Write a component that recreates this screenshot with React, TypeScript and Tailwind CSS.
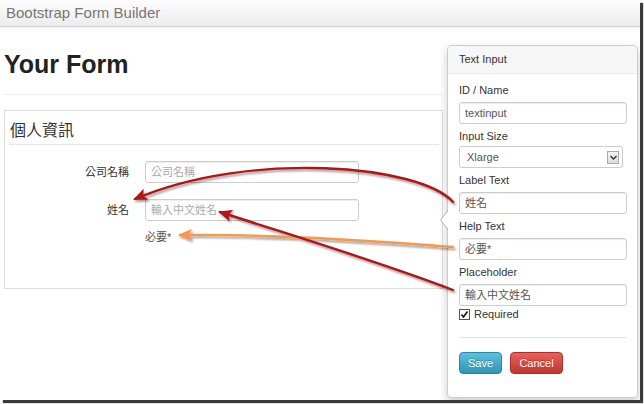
import React from "react";

const font = "font-['Liberation_Sans','Noto_Sans_CJK_TC',sans-serif]";

function Field({ label, value }: { label: string; value: string }) {
  return (
    <>
      <div className="mt-[5px] h-[14px] leading-[14px] text-[11px] text-[#333]">{label}</div>
      <div className="mt-[5px] h-[22px] w-[168px] rounded-[3px] border border-[#ccc] bg-white px-[5px] text-[11px] leading-[20px] text-[#555] shadow-[inset_0_1px_1px_rgba(0,0,0,0.075)]">
        {value}
      </div>
    </>
  );
}

function Arrows() {
  return (
    <svg className="absolute left-0 top-0 pointer-events-none" width="640" height="400" viewBox="0 0 640 400">
      <defs>
        <filter id="sh" filterUnits="userSpaceOnUse" x="0" y="0" width="640" height="400">
          <feDropShadow dx="1.5" dy="2" stdDeviation="1.2" floodColor="#000" floodOpacity="0.4" />
        </filter>
        <marker id="hr" markerUnits="userSpaceOnUse" viewBox="0 0 14 12" markerWidth="14" markerHeight="12" refX="12" refY="6" orient="auto">
          <path d="M0,0 L14,6 L0,12 L3,6 z" fill="#b01313" />
        </marker>
        <marker id="ho" markerUnits="userSpaceOnUse" viewBox="0 0 14 12" markerWidth="14" markerHeight="12" refX="12" refY="6" orient="auto">
          <path d="M0,0 L14,6 L0,12 L3,6 z" fill="#f7984a" />
        </marker>
      </defs>
      <g filter="url(#sh)" fill="none" strokeWidth="2.4" strokeLinecap="round">
        <path d="M453 202 C 420 165, 250 150, 135 199" stroke="#b01313" markerEnd="url(#hr)" />
        <path d="M453 247 C 350 239, 250 234, 180 235" stroke="#f7984a" markerEnd="url(#ho)" />
        <path d="M453 290 C 380 262, 300 238, 220 212" stroke="#b01313" markerEnd="url(#hr)" />
      </g>
    </svg>
  );
}

export default function App() {
  return (
    <div className={`w-[644px] h-[404px] bg-white ${font}`}>
      <div className="relative w-[640px] h-[400px] bg-white overflow-hidden shadow-[3px_3px_1px_#3c3c3c]">
        {/* navbar */}
        <div className="h-[27px] flex items-center px-[6px] bg-gradient-to-b from-[#fdfdfd] to-[#ececec] border-b border-[#d4d4d4] shadow-[0_1px_3px_rgba(0,0,0,0.08)]">
          <span className="text-[15px] text-[#777]">Bootstrap Form Builder</span>
        </div>

        <div className="px-[4px]">
          <h1 className="mt-[25px] text-[25px] leading-[25px] font-bold text-[#222]">Your Form</h1>
          <div className="mt-[17px] w-[439px] border-t border-[#eee]" />

          <div className="mt-[15px] w-[439px] h-[179px] border border-[#ddd] pl-[4px] pr-[3px]">
            <div className="mt-[10px] h-[24px] border-b border-[#e5e5e5] pl-[1px] text-[16px] leading-[20px] text-[#333]">
              個人資訊
            </div>

            <div className="mt-[16px] flex items-center">
              <div className="w-[120px] text-right text-[11px] text-[#333]">公司名稱</div>
              <div className="ml-[16px] h-[22px] w-[214px] rounded-[3px] border border-[#ccc] px-[5px] text-[11px] leading-[20px] text-[#aaa] shadow-[inset_0_1px_1px_rgba(0,0,0,0.075)]">
                公司名稱
              </div>
            </div>
            <div className="mt-[16px] flex items-center">
              <div className="w-[120px] text-right text-[11px] text-[#333]">姓名</div>
              <div className="ml-[16px] h-[22px] w-[214px] rounded-[3px] border border-[#ccc] px-[5px] text-[11px] leading-[20px] text-[#aaa] shadow-[inset_0_1px_1px_rgba(0,0,0,0.075)]">
                輸入中文姓名
              </div>
            </div>
            <div className="mt-[8px] ml-[136px] text-[11px] leading-[16px] text-[#555]">必要*</div>
          </div>
        </div>

        {/* popover */}
        <div className="absolute left-[447px] top-[45px] w-[191px] h-[353px] rounded-[5px] border border-[rgba(0,0,0,0.2)] bg-white shadow-[0_4px_10px_rgba(0,0,0,0.2)]">
          <div className="absolute left-[-8px] top-[164px] w-0 h-0 border-y-[10px] border-y-transparent border-r-[8px] border-r-[rgba(0,0,0,0.25)]" />
          <div className="absolute left-[-7px] top-[164px] w-0 h-0 border-y-[10px] border-y-transparent border-r-[8px] border-r-white" />
          <div className="h-[28px] rounded-t-[5px] border-b border-[#ebebeb] bg-[#f7f7f7] px-[11px] text-[11px] leading-[27px] text-[#333]">
            Text Input
          </div>
          <div className="px-[11px] pt-[4px]">
            <Field label="ID / Name" value="textinput" />
            <div className="mt-[5px] h-[14px] leading-[14px] text-[11px] text-[#333]">Input Size</div>
            <div className="mt-[3px] flex h-[22px] w-[164px] items-center justify-between rounded-[3px] border border-[#ccc] bg-white pl-[7px] pr-[3px] text-[11px] text-[#555]">
              <span>Xlarge</span>
              <span className="flex h-[13px] w-[12px] items-center justify-center border border-[#a9a9a9] bg-gradient-to-b from-[#f4f4f4] to-[#dcdcdc]">
                <svg width="7" height="5" viewBox="0 0 7 5">
                  <path d="M0.5 1 L3.5 4 L6.5 1" fill="none" stroke="#333" strokeWidth="1.4" />
                </svg>
              </span>
            </div>
            <Field label="Label Text" value="姓名" />
            <Field label="Help Text" value="必要*" />
            <Field label="Placeholder" value="輸入中文姓名" />
            <div className="mt-[2px] flex h-[12px] items-center">
              <span className="flex h-[11px] w-[11px] items-center justify-center border border-[#555] bg-white">
                <svg width="9" height="9" viewBox="0 0 9 9">
                  <path d="M1.5 4.5 L3.5 7 L7.5 1.5" fill="none" stroke="#111" strokeWidth="1.6" />
                </svg>
              </span>
              <span className="ml-[4px] text-[11px] text-[#333]">Required</span>
            </div>
            <div className="mt-[17px] w-[168px] border-t border-[#e5e5e5]" />
            <div className="mt-[14px] flex gap-[8px]">
              <div className="flex h-[22px] w-[43px] items-center justify-center rounded-[4px] border border-[#2a87a3] bg-gradient-to-b from-[#5bc0de] to-[#2f96b4] text-[11px] text-white [text-shadow:0_-1px_0_rgba(0,0,0,0.25)]">
                Save
              </div>
              <div className="flex h-[22px] w-[53px] items-center justify-center rounded-[4px] border border-[#a9302a] bg-gradient-to-b from-[#ee5f5b] to-[#bd362f] text-[11px] text-white [text-shadow:0_-1px_0_rgba(0,0,0,0.25)]">
                Cancel
              </div>
            </div>
          </div>
        </div>

        <Arrows />
      </div>
    </div>
  );
}
